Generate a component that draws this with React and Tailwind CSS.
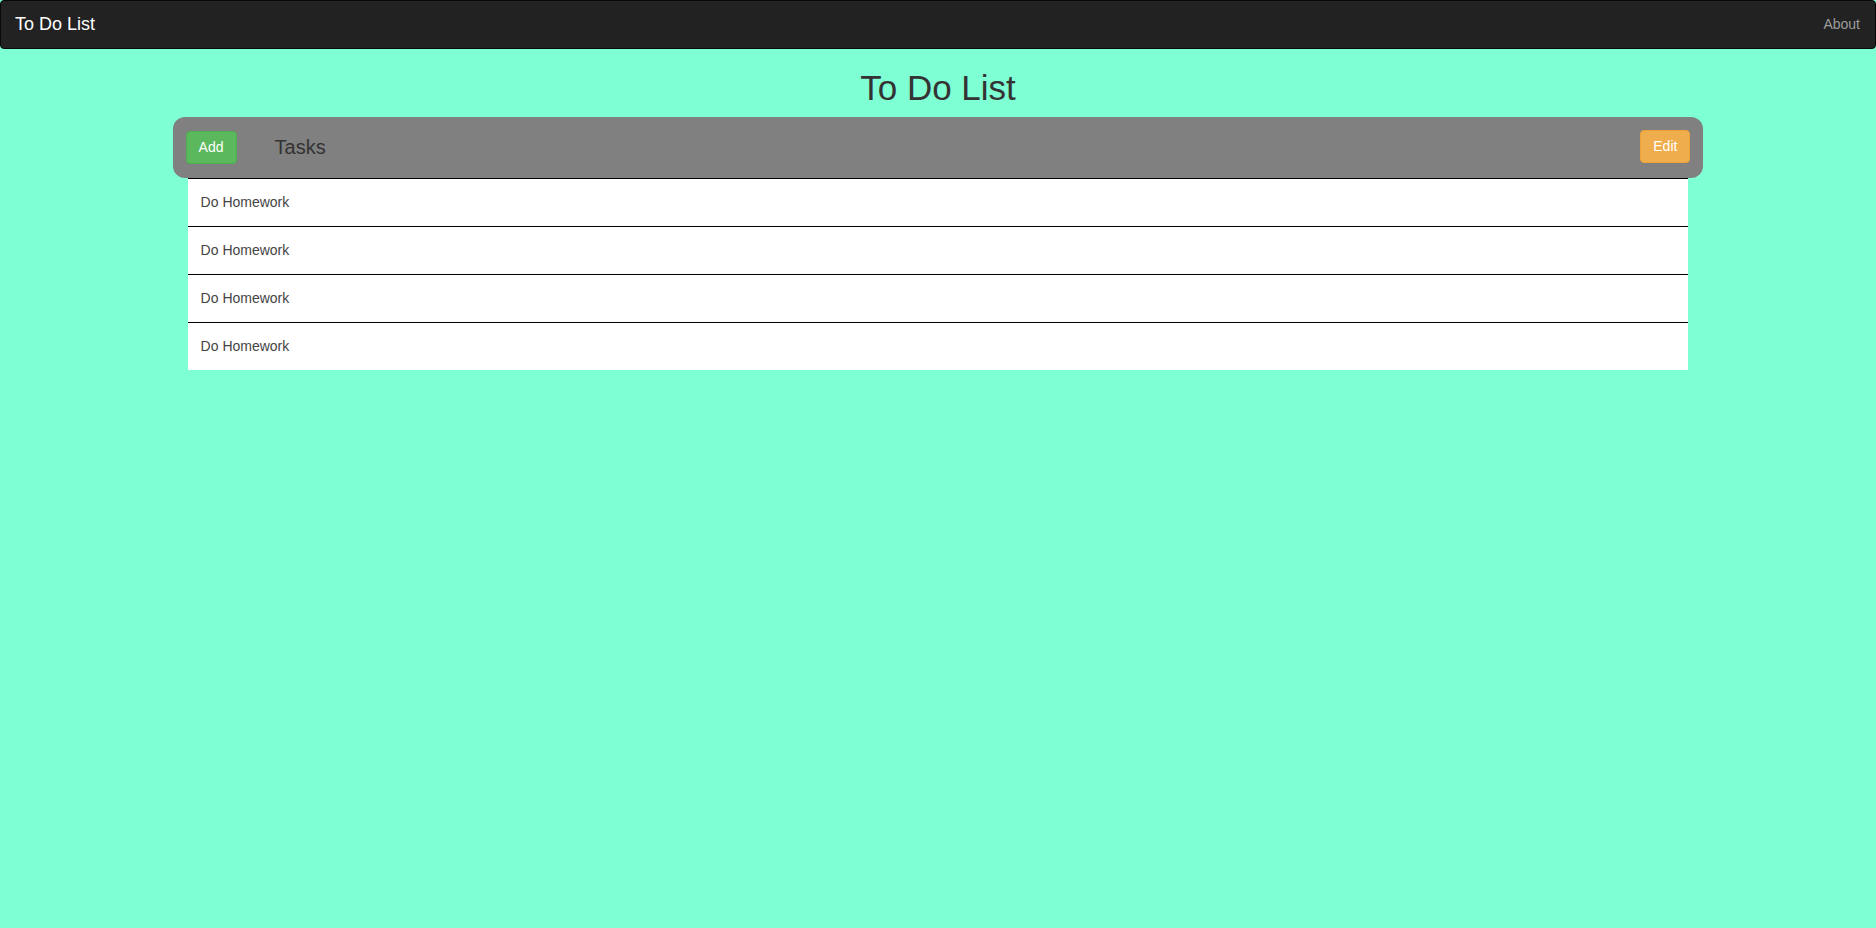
import React from 'react';

const tasks = ['Do Homework', 'Do Homework', 'Do Homework', 'Do Homework'];

const App = () => {
  return (
    <div
      className="min-h-screen bg-[#7fffd4]"
      style={{ fontFamily: '"Liberation Sans", Arial, sans-serif' }}
    >
      {/* Navbar */}
      <nav className="h-[49px] bg-[#222222] border border-[#080808] rounded-[4px] flex items-center justify-between">
        <span className="pl-[14px] text-[18px] text-white">To Do List</span>
        <span className="pr-[15px] text-[14px] text-[#9d9d9d]">About</span>
      </nav>

      <h1 className="mt-[20px] mb-[10px] text-center text-[35px] leading-[38px] text-[#333333]">
        To Do List
      </h1>

      {/* Panel header */}
      <div className="w-[calc(80%+30px)] mx-auto h-[61px] bg-[#808080] rounded-[12px] px-[13px] flex items-center">
        <button className="h-[33px] px-[12px] text-[14px] text-white bg-[#5cb85c] border border-[#4cae4c] rounded-[4px]">
          Add
        </button>
        <span className="ml-[38px] text-[20px] text-[#333333] -mt-[2px]">Tasks</span>
        <button className="ml-auto h-[33px] px-[12px] text-[14px] text-white bg-[#f0ad4e] border border-[#eea236] rounded-[4px] -mt-[2px]">
          Edit
        </button>
      </div>

      {/* Task list */}
      <ul className="w-[80%] mx-auto">
        {tasks.map((task, i) => (
          <li
            key={i}
            className="h-[48px] bg-white border-t border-black flex items-center pl-[13px] text-[14px] text-[#444444]"
          >
            {task}
          </li>
        ))}
      </ul>
    </div>
  );
};

export default App;
